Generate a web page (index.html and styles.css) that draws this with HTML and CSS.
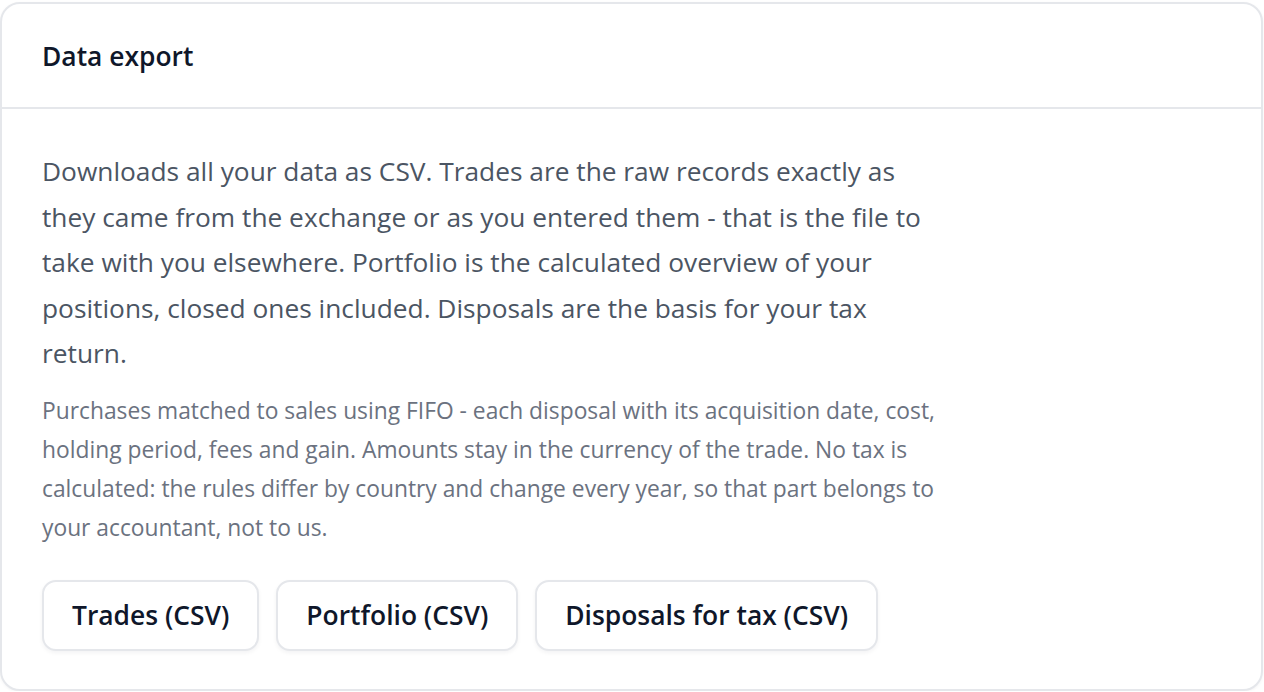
FILE: index.html
```html
<!DOCTYPE html>
<html lang="en">
<head>
  <meta charset="UTF-8" />
  <meta name="viewport" content="width=device-width, initial-scale=1.0" />
  <title>Data export</title>
  <link rel="stylesheet" href="styles.css">
</head>
<body>
  <section class="card">
    <header class="card-header">
      <h2>Data export</h2>
    </header>
    <div class="card-body">
      <p class="lead">Downloads all your data as CSV. Trades are the raw records exactly as they came from the exchange or as you entered them - that is the file to take with you elsewhere. Portfolio is the calculated overview of your positions, closed ones included. Disposals are the basis for your tax return.</p>
      <p class="note">Purchases matched to sales using FIFO - each disposal with its acquisition date, cost, holding period, fees and gain. Amounts stay in the currency of the trade. No tax is calculated: the rules differ by country and change every year, so that part belongs to your accountant, not to us.</p>
      <div class="actions">
        <button class="btn">Trades (CSV)</button>
        <button class="btn">Portfolio (CSV)</button>
        <button class="btn">Disposals for tax (CSV)</button>
      </div>
    </div>
  </section>
</body>
</html>
```

FILE: styles.css
```css
body {
  margin: 0;
  padding: 2px 1px 0 0;
  font-family: "Open Sans", "Noto Sans", Arial, sans-serif;
  background: #fff;
  color: #111827;
}
.card {
  border: 2px solid #e5e7eb;
  border-radius: 20px;
  background: #fff;
  box-shadow: 0 1px 3px rgba(15, 23, 42, 0.05);
}
.card-header {
  padding: 36px 40px 35px;
  border-bottom: 2px solid #e5e7eb;
}
.card-header h2 {
  margin: 0;
  font-size: 26.4px;
  font-weight: 600;
  line-height: 32px;
  color: #0f172a;
}
.card-body {
  padding: 40px 40px 38px;
}
.lead {
  max-width: 900px;
  margin: 0 0 14px;
  font-size: 26.3px;
  line-height: 45.5px;
  color: #4b5563;
}
.note {
  max-width: 900px;
  margin: 0 0 32px;
  font-size: 22.8px;
  line-height: 39.3px;
  color: #6b7280;
}
.actions {
  display: flex;
  gap: 17px;
}
.btn {
  height: 71px;
  padding: 0 28px;
  font-family: inherit;
  font-size: 26.4px;
  font-weight: 600;
  color: #0f172a;
  background: #fff;
  border: 2px solid #e5e7eb;
  border-radius: 14px;
  box-shadow: 0 2px 4px rgba(15, 23, 42, 0.05);
  cursor: pointer;
}
```
